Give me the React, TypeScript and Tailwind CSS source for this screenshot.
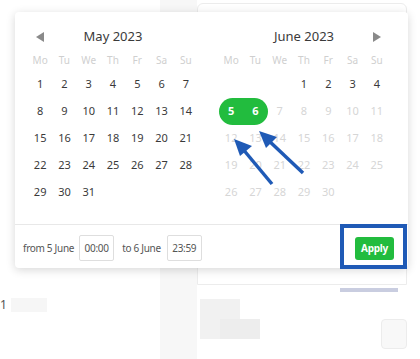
import React from "react";

const weekDays = ["Mo", "Tu", "We", "Th", "Fr", "Sa", "Su"];

type Day = { n: number; state?: "off" | "start" | "end" } | null;

const mayDays: Day[] = Array.from({ length: 31 }, (_, i) => ({ n: i + 1 }));

const juneDays: Day[] = [
  null,
  null,
  null,
  ...Array.from({ length: 30 }, (_, i) => {
    const n = i + 1;
    if (n === 5) return { n, state: "start" as const };
    if (n === 6) return { n, state: "end" as const };
    if (n > 6) return { n, state: "off" as const };
    return { n };
  }),
];

function Arrow({ dir }: { dir: "left" | "right" }) {
  return (
    <svg width="8" height="10" viewBox="0 0 8 10">
      {dir === "left" ? (
        <polygon points="8,0 8,10 0,5" fill="#8a8a8a" />
      ) : (
        <polygon points="0,0 0,10 8,5" fill="#8a8a8a" />
      )}
    </svg>
  );
}

function Month({
  title,
  days,
  arrow,
}: {
  title: string;
  days: Day[];
  arrow: "left" | "right";
}) {
  return (
    <div className="w-[170px]">
      <div className="relative flex h-[24px] items-center justify-center">
        <div
          className={
            arrow === "left"
              ? "absolute left-[8px] top-[7px]"
              : "absolute right-[8px] top-[7px]"
          }
        >
          <Arrow dir={arrow} />
        </div>
        <span className="text-[13px] text-[#3a3a3a]">{title}</span>
      </div>
      <div className="grid h-[22px] grid-cols-7 items-center text-center text-[10px] text-[#cfcfcf]">
        {weekDays.map((w) => (
          <span key={w}>{w}</span>
        ))}
      </div>
      <div className="grid grid-cols-7 text-center text-[11px]">
        {days.map((d, i) => {
          if (!d) return <div key={i} className="h-[27px]" />;
          let cls = "flex h-[27px] items-center justify-center text-[#3a3a3a]";
          if (d.state === "off") cls = "flex h-[27px] items-center justify-center text-[#d6d6d6]";
          if (d.state === "start")
            cls =
              "flex h-[27px] items-center justify-center rounded-l-full bg-[#22bc3e] font-bold text-white";
          if (d.state === "end")
            cls =
              "flex h-[27px] items-center justify-center rounded-r-full bg-[#22bc3e] font-bold text-white";
          return (
            <div key={i} className={cls}>
              {d.n}
            </div>
          );
        })}
      </div>
    </div>
  );
}

export default function App() {
  return (
    <div
      className="relative h-[359px] w-[420px] overflow-hidden bg-white"
      style={{ fontFamily: '"Noto Sans", "Open Sans", sans-serif' }}
    >
      {/* page behind the popup */}
      <div className="flex h-full">
        <div className="w-[160px] pt-[298px]">
          <div className="flex items-center">
            <span className="text-[12px] leading-none text-[#555]">1</span>
            <div className="ml-[4px] h-[14px] w-[36px] bg-[#f6f6f6]" />
          </div>
        </div>
        <div className="w-[37px] bg-[#f7f7f7]" />
        <div className="flex w-[210px] flex-col">
          <div className="mt-[3px] h-[282px] rounded-t-[6px] border border-[#ececec] px-[9px] pt-[4px]">
            <span className="text-[11px] text-[#444]">Cut requests</span>
            <div className="mt-[256px] ml-[133px] h-[4px] w-[58px] bg-[#c9cde0]" />
          </div>
          <div className="flex items-start pt-[14px]">
            <div className="ml-[3px] flex flex-col">
              <div className="h-[20px] w-[40px] bg-[#f1f1f1]" />
              <div className="flex">
                <div className="h-[20px] w-[20px] bg-[#f1f1f1]" />
                <div className="h-[20px] w-[40px] bg-[#ededed]" />
              </div>
            </div>
            <div className="ml-auto mt-[20px] h-[30px] w-[26px] rounded-[4px] border border-[#ececec] bg-[#f8f8f8]" />
          </div>
        </div>
      </div>

      {/* date range popup */}
      <div className="absolute left-[15px] top-[12px] h-[256px] w-[393px] rounded-[4px] bg-white shadow-[0_2px_10px_rgba(0,0,0,0.16)]">
        <div className="flex gap-[21px] px-[13px] pt-[13px]">
          <Month title="May 2023" days={mayDays} arrow="left" />
          <Month title="June 2023" days={juneDays} arrow="right" />
        </div>
        <div className="mt-[18px] flex h-[44px] items-start border-t border-[#e8e8e8] pl-[8px] pr-[14px] pt-[10px] text-[10px] tracking-[-0.3px] text-[#555]">
          <span className="mt-[6px]">from 5 June</span>
          <div className="ml-[5px] flex h-[26px] w-[35px] items-center justify-center rounded-[2px] border border-[#dedede] text-[10px]">
            00:00
          </div>
          <span className="ml-[8px] mt-[6px]">to 6 June</span>
          <div className="ml-[6px] flex h-[26px] w-[35px] items-center justify-center rounded-[2px] border border-[#dedede] text-[10px]">
            23:59
          </div>
          <button className="ml-auto mt-[2px] flex h-[23px] w-[39px] items-center justify-center rounded-[3px] bg-[#22bc3e] text-[10px] font-bold text-white">
            Apply
          </button>
        </div>
      </div>

      {/* annotation: box around Apply */}
      <div className="absolute left-[340px] top-[224px] h-[45px] w-[67px] border-[4px] border-[#1f5ab6]" />

      {/* annotation: arrows */}
      <svg
        className="absolute left-0 top-0"
        width="420"
        height="359"
        viewBox="0 0 420 359"
      >
        <line x1="272" y1="184" x2="242" y2="148" stroke="#1f5ab6" strokeWidth="3.5" />
        <polygon points="234,139 252,146 240,156" fill="#1f5ab6" />
        <line x1="303" y1="173" x2="267" y2="139" stroke="#1f5ab6" strokeWidth="3.5" />
        <polygon points="259,131 277,137 266,148" fill="#1f5ab6" />
      </svg>
    </div>
  );
}
